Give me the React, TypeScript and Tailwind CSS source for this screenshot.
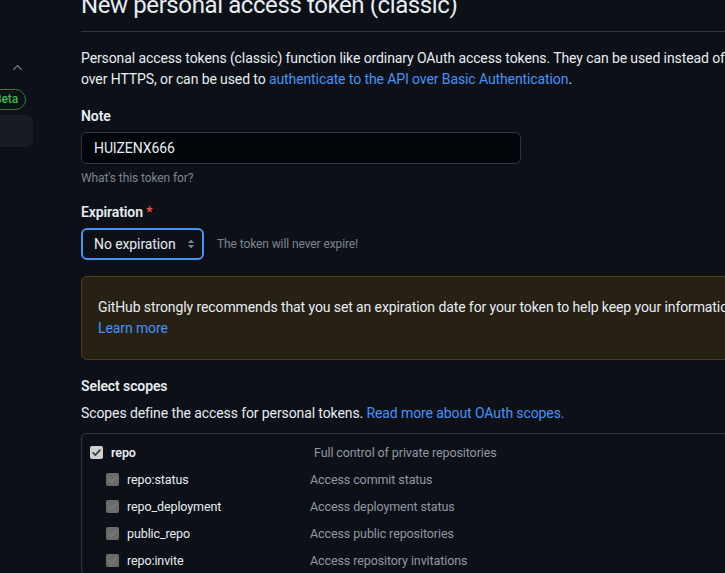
import { ChevronUp } from "lucide-react";

type Scope = { name: string; description: string };

const subScopes: Scope[] = [
  { name: "repo:status", description: "Access commit status" },
  { name: "repo_deployment", description: "Access deployment status" },
  { name: "public_repo", description: "Access public repositories" },
  { name: "repo:invite", description: "Access repository invitations" },
];

function Check({ disabled }: { disabled?: boolean }) {
  return (
    <span
      className={
        disabled
          ? "flex h-[13px] w-[13px] shrink-0 items-center justify-center rounded-[2px] bg-[#6b6b6b]"
          : "flex h-[13px] w-[13px] shrink-0 items-center justify-center rounded-[2px] bg-[#cfcfcf]"
      }
    >
      <svg viewBox="0 0 12 12" className="h-[11px] w-[11px]">
        <path
          d="M2.2 6.3l2.5 2.5 5-5.4"
          fill="none"
          stroke={disabled ? "#7b7b7b" : "#3a3a3a"}
          strokeWidth="1.8"
          strokeLinecap="round"
          strokeLinejoin="round"
        />
      </svg>
    </span>
  );
}

function Sidebar() {
  return (
    <div className="relative w-[81px] shrink-0">
      <ChevronUp
        className="absolute left-[10px] top-[60px] h-[15px] w-[15px] text-[#7d8590]"
        strokeWidth={2}
      />
      <span className="absolute left-[-14px] top-[89px] flex h-[21px] items-center rounded-full border border-[#238636] px-[7px] text-[12px] font-medium text-[#3fb950]">
        Beta
      </span>
      <div className="absolute left-[-20px] top-[115px] h-[32px] w-[53px] rounded-md bg-[#171b22]" />
    </div>
  );
}

export default function App() {
  return (
    <div
      className="flex h-[573px] w-[725px] overflow-hidden bg-[#0d1117] text-[14px] leading-[21px] tracking-[-0.1px] text-[#e6edf3]"
      style={{ fontFamily: '"Segoe UI", Roboto, "Liberation Sans", sans-serif' }}
    >
      <Sidebar />
      <div className="w-[900px] shrink-0">
        <div className="-mt-[13px] mb-4 border-b border-[#30363d] pb-2">
          <h1 className="text-[24px] font-normal leading-[36px] tracking-[-0.4px]">
            New personal access token (classic)
          </h1>
        </div>

        <p>
          Personal access tokens (classic) function like ordinary OAuth access
          tokens. They can be used instead of a password for Git
          <br />
          over HTTPS, or can be used to{" "}
          <a className="text-[#4493f8]">
            authenticate to the API over Basic Authentication
          </a>
          .
        </p>

        <div className="mt-4">
          <label className="block font-semibold">Note</label>
          <div className="mt-[5px] flex h-[32px] w-[440px] items-center rounded-md border border-[#30363d] bg-[#010409] px-3">
            HUIZENX666
          </div>
          <p className="mt-[5px] text-[12px] leading-[18px] text-[#7d8590]">
            What's this token for?
          </p>
        </div>

        <div className="mt-[15px]">
          <label className="block font-semibold">
            Expiration <span className="text-[#f85149]">*</span>
          </label>
          <div className="mt-[5px] flex items-center gap-[13px]">
            <div className="flex h-[32px] w-[123px] items-center justify-between rounded-md border-2 border-[#4493f8] bg-[#0d1117] pl-[11px] pr-[7px]">
              <span>No expiration</span>
              <svg viewBox="0 0 8 12" className="h-[12px] w-[8px]">
                <path d="M4 1.5l3 3.5H1z M4 10.5l3-3.5H1z" fill="#7d8590" />
              </svg>
            </div>
            <span className="text-[12px] text-[#7d8590]">
              The token will never expire!
            </span>
          </div>
        </div>

        <div className="mt-4 rounded-md border border-[#533d11] bg-[#272115] px-4 py-5">
          <p>
            GitHub strongly recommends that you set an expiration date for your
            token to help keep your information secure.
          </p>
          <a className="text-[#4493f8]">Learn more</a>
        </div>

        <h3 className="mt-4 font-semibold">Select scopes</h3>
        <p className="mt-[6px]">
          Scopes define the access for personal tokens.{" "}
          <a className="text-[#4493f8]">Read more about OAuth scopes.</a>
        </p>

        <div className="mt-[9px] rounded-md border border-[#30363d] pt-[5px] text-[12.5px]">
          <div className="flex h-[27px] items-center">
            <div className="flex w-[232px] items-center gap-[8px] pl-[8px]">
              <Check />
              <span className="font-semibold">repo</span>
            </div>
            <span className="text-[#9198a1]">
              Full control of private repositories
            </span>
          </div>
          {subScopes.map((scope) => (
            <div key={scope.name} className="flex h-[27px] items-center">
              <div className="flex w-[228px] items-center gap-[8px] pl-[24px]">
                <Check disabled />
                <span>{scope.name}</span>
              </div>
              <span className="text-[#9198a1]">{scope.description}</span>
            </div>
          ))}
        </div>
      </div>
    </div>
  );
}
